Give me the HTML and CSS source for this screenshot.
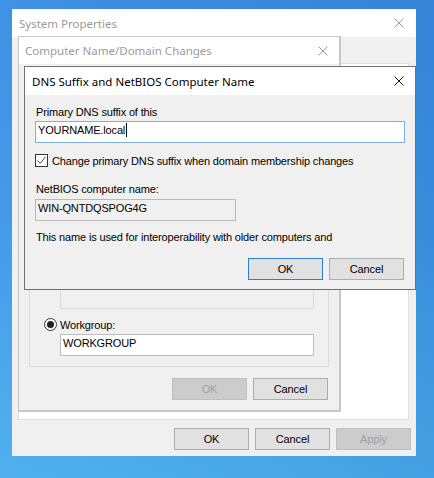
FILE: index.html
```html
<!DOCTYPE html>
<html>
<head>
<meta charset="utf-8">
<title>System Properties</title>
<link rel="stylesheet" href="styles.css">
</head>
<body>
<div class="desktop">

  <div class="win sysprops">
    <div class="titlebar inactive">
      <span class="title">System Properties</span>
      <svg class="close" width="10" height="10" viewBox="0 0 10 10"><path d="M0.5 0.5 L9.5 9.5 M9.5 0.5 L0.5 9.5"/></svg>
    </div>
    <div class="sp-body">
      <div class="tabpage"></div>
      <div class="btnrow sp-btns">
        <div class="btn">OK</div>
        <div class="btn">Cancel</div>
        <div class="btn disabled">Apply</div>
      </div>
    </div>
  </div>

  <div class="win compname">
    <div class="titlebar inactive cn-title">
      <span class="title">Computer Name/Domain Changes</span>
      <svg class="close" width="10" height="10" viewBox="0 0 10 10"><path d="M0.5 0.5 L9.5 9.5 M9.5 0.5 L0.5 9.5"/></svg>
    </div>
    <div class="cn-body">
      <div class="groupbox">
        <div class="field cn-field disabled-field"></div>
        <div class="radio-row wg-row">
          <span class="radio checked"><span class="dot"></span></span><span>Workgroup:</span>
        </div>
        <div class="field cn-field">WORKGROUP</div>
      </div>
      <div class="btnrow cn-btns">
        <div class="btn disabled">OK</div>
        <div class="btn">Cancel</div>
      </div>
    </div>
  </div>

  <div class="win dns">
    <div class="titlebar active dns-title">
      <span class="title">DNS Suffix and NetBIOS Computer Name</span>
      <svg class="close" width="10" height="10" viewBox="0 0 10 10"><path d="M0.5 0.5 L9.5 9.5 M9.5 0.5 L0.5 9.5"/></svg>
    </div>
    <div class="dns-body">
      <div class="label">Primary DNS suffix of this</div>
      <div class="field focus-field">YOURNAME.local<span class="caret"></span></div>
      <div class="check-row">
        <span class="checkbox"><svg width="11" height="11" viewBox="0 0 11 11"><path d="M1.5 5.5 L4.2 8.3 L9.5 1.8"/></svg></span>
        <span>Change primary DNS suffix when domain membership changes</span>
      </div>
      <div class="label nb-label">NetBIOS computer name:</div>
      <div class="field ro-field">WIN-QNTDQSPOG4G</div>
      <div class="label info">This name is used for interoperability with older computers and</div>
      <div class="btnrow dns-btns">
        <div class="btn default">OK</div>
        <div class="btn">Cancel</div>
      </div>
    </div>
  </div>

</div>
</body>
</html>
```
FILE: styles.css
```css
html, body {
  margin: 0;
  padding: 0;
  width: 434px;
  height: 478px;
  overflow: hidden;
}

body {
  font-family: "Liberation Sans", Arial, sans-serif;
  font-size: 11px;
  letter-spacing: -0.15px;
  color: #000;
}

.desktop {
  position: relative;
  width: 434px;
  height: 478px;
  background:
    linear-gradient(100deg, rgba(255,255,255,0.04) 0%, rgba(0,20,80,0.10) 100%),
    linear-gradient(180deg, #388de3 0%, #3d98e8 45%, #4cb1f3 100%);
}

.win {
  position: absolute;
  box-sizing: border-box;
  display: flex;
  flex-direction: column;
  background: #f0f0f0;
  overflow: hidden;
}

.titlebar {
  flex: none;
  height: 28px;
  background: #fff;
  display: flex;
  align-items: center;
  justify-content: space-between;
  padding: 0 12px 0 7px;
  font-family: "Noto Sans", "Open Sans", sans-serif;
  font-size: 11.5px;
  letter-spacing: 0;
}

.titlebar .close path {
  fill: none;
  stroke-width: 1;
}

.titlebar.inactive {
  color: #9b9b9b;
}

.titlebar.inactive .close path {
  stroke: #9b9b9b;
}

.titlebar.active {
  color: #000;
}

.titlebar.active .close path {
  stroke: #111;
}

/* System Properties */
.sysprops {
  left: 12px;
  top: 9px;
  width: 404px;
  height: 447px;
}

.sp-body {
  flex: 1;
  display: flex;
  flex-direction: column;
  padding: 26px 5px 7px 6px;
}

.tabpage {
  height: 357px;
  margin-right: 2px;
  box-sizing: border-box;
  background: #fff;
  border: 1px solid #dfdfdf;
}

.btnrow {
  display: flex;
  justify-content: flex-end;
  gap: 6px;
}

.sp-btns {
  margin-top: 8px;
}

.btn {
  width: 75px;
  height: 22px;
  box-sizing: border-box;
  border: 1px solid #adadad;
  background: #e1e1e1;
  display: flex;
  align-items: center;
  justify-content: center;
}

.btn.disabled {
  background: #cccccc;
  border-color: #bfbfbf;
  color: #a0a0a0;
}

.btn.default {
  border-color: #2b80d6;
}

/* Computer Name/Domain Changes */
.compname {
  left: 18px;
  top: 36px;
  width: 323px;
  height: 376px;
  border: 1px solid #c6c6c6;
  border-right-width: 2px;
  border-bottom-width: 2px;
}

.cn-title {
  height: 27px;
  padding: 0 11px 0 6px;
}

.cn-body {
  flex: 1;
  display: flex;
  flex-direction: column;
  justify-content: flex-end;
  padding: 0 10px 10px 10px;
}

.label {
  line-height: 14px;
  padding-left: 1px;
}

.field {
  height: 22px;
  box-sizing: border-box;
  border: 1px solid #bcbcbc;
  background: #fff;
  padding: 1px 2px 0;
  line-height: 14px;
  white-space: nowrap;
}

.cn-field {
  width: 254px;
  margin-left: 16px;
  margin-top: 3px;
}

.disabled-field {
  background: #f0f0f0;
  border-color: #dadada;
}

.groupbox {
  border: 1px solid #dcdcdc;
  padding: 40px 14px 10px 14px;
}

.radio-row {
  display: flex;
  align-items: center;
  gap: 3px;
  height: 13px;
}

.wg-row {
  margin-top: 9px;
}

.radio {
  width: 13px;
  height: 13px;
  box-sizing: border-box;
  border: 1px solid #333;
  border-radius: 50%;
  background: #fff;
  display: flex;
  align-items: center;
  justify-content: center;
}

.radio .dot {
  width: 7px;
  height: 7px;
  border-radius: 50%;
  background: #222;
}

.cn-btns {
  margin-top: 11px;
  padding-right: 1px;
}

/* DNS dialog */
.dns {
  left: 24px;
  top: 66px;
  width: 392px;
  height: 224px;
  border: 1px solid #707070;
}

.dns-title {
  padding: 0 11px 0 7px;
}

.dns-body {
  flex: 1;
  display: flex;
  flex-direction: column;
  padding: 10px 10px 9px 10px;
}

.focus-field {
  margin-top: 2px;
  border-color: #7eaee3;
  display: flex;
}

.caret {
  display: inline-block;
  width: 1px;
  height: 14px;
  background: #000;
  margin-left: 1px;
}

.check-row {
  display: flex;
  align-items: center;
  gap: 4px;
  height: 13px;
  margin-top: 11px;
}

.checkbox {
  width: 13px;
  height: 13px;
  box-sizing: border-box;
  border: 1px solid #333;
  background: #fff;
  display: flex;
  align-items: center;
  justify-content: center;
}

.checkbox path {
  fill: none;
  stroke: #444;
  stroke-width: 1;
}

.nb-label {
  margin-top: 15px;
}

.ro-field {
  width: 201px;
  margin-top: 3px;
  background: #f0f0f0;
  border-color: #b9b9b9;
}

.info {
  margin-top: 9px;
}

.dns-btns {
  margin-top: 14px;
  padding-right: 1px;
}
```
